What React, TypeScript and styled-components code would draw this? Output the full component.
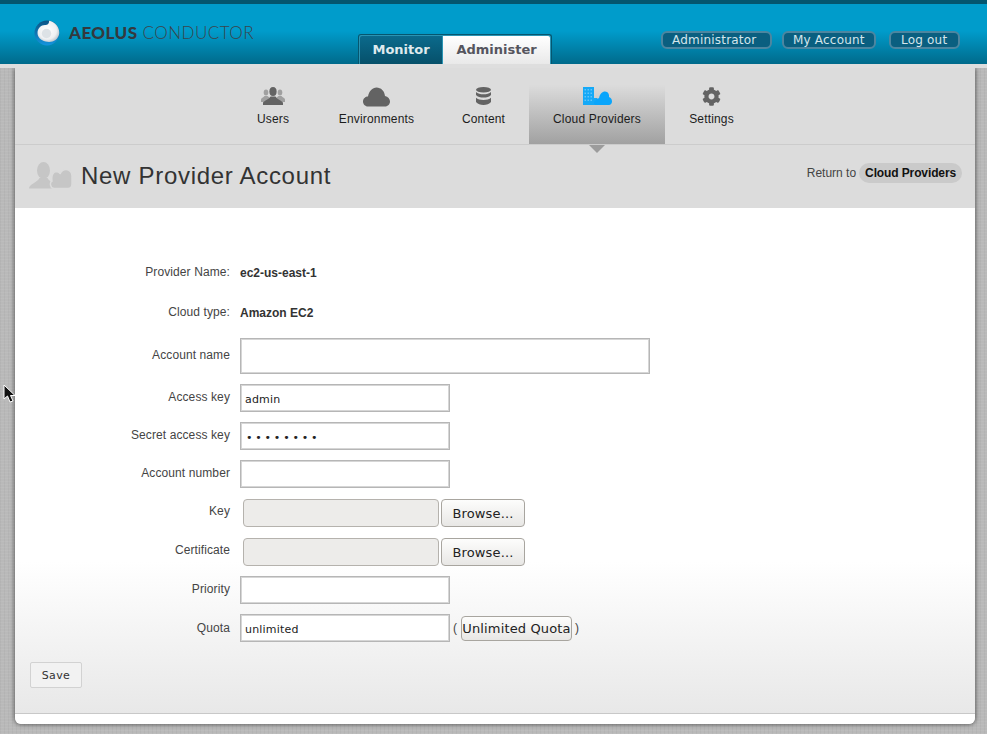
import React from "react";
import styled, { createGlobalStyle } from "styled-components";
import { FaCog } from "react-icons/fa";

const Global = createGlobalStyle`
  html, body { margin: 0; padding: 0; }
  body {
    width: 987px; height: 734px; overflow: hidden;
    font-family: "Liberation Sans", Arial, sans-serif;
    background-color: #b9b9b9;
    background-image:
      repeating-linear-gradient(0deg, rgba(255,255,255,.05) 0 1px, transparent 1px 3px),
      repeating-linear-gradient(90deg, rgba(0,0,0,.03) 0 1px, transparent 1px 4px);
  }
`;

const Page = styled.div`position: relative; width: 987px; height: 734px; overflow: hidden;`;

const Header = styled.header`
  position: relative; z-index: 1;
  box-sizing: border-box;
  height: 68px;
  border-top: 4px solid #04566f;
  border-bottom: 4px solid #dedede;
  background: linear-gradient(#009ccb 0, #009ccb 45%, #006a8b 100%);
  display: flex;
  align-items: flex-start;
`;

const Logo = styled.div`
  display: flex; align-items: center; gap: 9px;
  margin: 15px 0 0 34px; width: 324px;
`;
const LogoText = styled.div`
  font-family: "Lato", sans-serif; font-size: 17px; line-height: 28px; color: #3b444b;
  letter-spacing: .45px; font-weight: 300; white-space: nowrap;
  b { font-weight: 900; color: #34393e; }
`;

const Tabs = styled.nav`
  box-sizing: border-box;
  display: flex; align-items: stretch; margin-top: 30px; width: 194px; height: 30px;
  border: 1px solid #05566f; border-bottom: 0; border-radius: 3px 3px 0 0;
  padding: 1px 1px 0; background: #2a94b4;
`;
const Tab = styled.div<{ $active?: boolean }>`
  display: flex; align-items: center; justify-content: center;
  font-family: "DejaVu Sans", sans-serif; font-weight: 700; font-size: 13px;
  padding-bottom: 1px; box-sizing: border-box;
  width: ${p => (p.$active ? "83px" : "108px")};
  margin-left: ${p => (p.$active ? "0" : "1px")};
  color: ${p => (p.$active ? "#dfeaee" : "#55555e")};
  background: ${p => (p.$active ? "linear-gradient(#0b6a8c, #06506a)" : "linear-gradient(#ffffff, #e9e9e9)")};
  border-radius: ${p => (p.$active ? "2px 0 0 0" : "0 2px 0 0")};
`;

const UserLinks = styled.div`display: flex; margin: 27px 0 0 109px;`;
const UserLink = styled.div<{ $w: number; $gap: number; $pl: number }>`
  box-sizing: border-box; height: 18px; width: ${p => p.$w}px; margin-right: ${p => p.$gap}px;
  padding-left: ${p => p.$pl}px;
  border: 2px solid #4c86a0; border-radius: 6px; background: #0a5f80;
  color: #d5e6ec; font-family: "DejaVu Sans", sans-serif; font-size: 12px; line-height: 15px; letter-spacing: .2px;
  white-space: nowrap;
`;

const Panel = styled.main`
  box-sizing: border-box;
  width: 960px; height: 656px; margin-left: 15px;
  background: #dcdcdc;
  border-radius: 0 0 6px 6px;
  box-shadow: 0 0 5px rgba(0,0,0,.65);
  display: flex; flex-direction: column;
  overflow: hidden;
`;

const Nav = styled.div`
  box-sizing: border-box; height: 77px; flex: none;
  border-bottom: 1px solid #cccccc;
  display: flex; justify-content: center; padding-right: 1px;
`;
const NavItem = styled.div<{ $active?: boolean; $w: number }>`
  position: relative;
  box-sizing: border-box; height: 76px; width: ${p => p.$w}px; padding-top: 19px;
  display: flex; flex-direction: column; align-items: center;
  font-size: 12px; letter-spacing: .17px; color: #1c1c1c; white-space: nowrap;
  background: ${p => (p.$active ? "linear-gradient(#dcdcdc 0, #dcdcdc 22%, #a1a1a1 100%)" : "none")};
  &::after {
    content: "";
    display: ${p => (p.$active ? "block" : "none")};
    position: absolute; left: 50%; bottom: -9px; margin-left: -8px;
    border: 8px solid transparent; border-bottom: 0; border-top-color: #9c9c9c;
  }
`;
const NavIcon = styled.div`height: 24px; display: flex; align-items: flex-start; justify-content: center;`;
const NavLabel = styled.span`line-height: 16px;`;

const TitleBar = styled.div`
  box-sizing: border-box; height: 63px; flex: none;
  display: flex; align-items: center; padding: 0 13px 2px 14px;
`;
const Title = styled.h1`
  margin: 0 0 0 8px; font-size: 24px; font-weight: 400; color: #333; letter-spacing: .7px; line-height: 30px;
`;
const ReturnTo = styled.div`
  margin-left: auto; margin-bottom: 6px; display: flex; align-items: center; gap: 3px;
  font-size: 12px; color: #444;
`;
const Pill = styled.span`
  background: #cacaca; border-radius: 10px; padding: 0 6px; height: 20px; line-height: 20px;
  font-weight: 700; color: #111; letter-spacing: -.12px;
`;

const Content = styled.section`
  flex: 1; background: linear-gradient(#fff 0, #fff 70%, #e8e8e8 100%);
  border-bottom: 1px solid #c8c8c8;
  box-sizing: border-box; padding: 52px 0 0 15px;
`;
const Row = styled.div<{ $h: number; $mb?: number }>`
  display: grid; grid-template-columns: 200px 1fr; column-gap: 10px; align-items: start;
  height: ${p => p.$h}px; margin-bottom: ${p => p.$mb ?? 10}px;
`;
const Label = styled.label<{ $top?: number }>`
  text-align: right; font-size: 12px; letter-spacing: .1px; color: #444; line-height: 16px; padding-top: ${p => p.$top ?? 4}px;
`;
const Value = styled.div`
  font-size: 12px; font-weight: 700; color: #333; line-height: 16px; padding-top: 5px;
`;
const Field = styled.div<{ $top?: number }>`display: flex; align-items: center; margin-top: ${p => p.$top ?? 0}px;`;
const Input = styled.input<{ $w: number; $h: number; $dots?: boolean }>`
  box-sizing: border-box; width: ${p => p.$w}px; height: ${p => p.$h}px;
  border: 1px solid #b6b6b6; box-shadow: inset 0 0 0 1px #d6d6d6; border-radius: 0; background: #fff; outline: 0;
  padding: 2px 4px 0 ${p => (p.$dots ? "5px" : "4px")}; margin: 0;
  font-family: "DejaVu Sans", sans-serif; font-size: 11px; color: #222;
  letter-spacing: ${p => (p.$dots ? "2.8px" : ".2px")};
`;
const FileBox = styled.div`
  box-sizing: border-box; width: 196px; height: 28px; margin: 0 2px 0 3px;
  border: 1px solid #b5b2ad; border-radius: 4px; background: #edecea;
`;
const NativeButton = styled.button<{ $w: number; $h: number }>`
  box-sizing: border-box; width: ${p => p.$w}px; height: ${p => p.$h}px; padding: 0; margin: 0;
  border: 1px solid #a8a59f; border-radius: 4px;
  background: linear-gradient(#fdfdfc, #e8e7e5);
  font-family: "DejaVu Sans", sans-serif; font-size: 13px; letter-spacing: .15px; color: #222; white-space: nowrap;
`;
const Paren = styled.span`
  font-size: 12px; color: #444; margin: 0 4px 0 3px;
`;
const SaveButton = styled.button`
  display: block; box-sizing: border-box; width: 52px; height: 26px; margin: 20px 0 0 0; padding: 0;
  border: 1px solid #d2d2d2; border-radius: 2px; background: #f2f2f2;
  font-family: "DejaVu Sans", sans-serif; font-size: 11px; letter-spacing: .4px; color: #333;
`;
const Footer = styled.div`height: 10px; flex: none; background: #fff;`;

const Cursor = styled.svg`position: absolute; left: 3px; top: 384px;`;

const LogoBall = () => (
  <svg width="26" height="27" viewBox="0 0 26 27">
    <defs>
      <radialGradient id="lg1" cx="45%" cy="45%" r="60%">
        <stop offset="0" stopColor="#ffffff" />
        <stop offset=".7" stopColor="#eef0f2" />
        <stop offset="1" stopColor="#b8c2c9" />
      </radialGradient>
      <linearGradient id="lg2" x1="0" y1="0" x2="0" y2="1">
        <stop offset="0" stopColor="#0b5485" />
        <stop offset="1" stopColor="#1494dd" />
      </linearGradient>
    </defs>
    <circle cx="13" cy="13" r="12.5" fill="url(#lg2)" />
    <path d="M15 .7C21 1.500 25.500 7 25.300 13C25 16 23.500 18.500 21.500 20C19 22 15 22.500 11.500 21.500C7 20.500 3.500 17 3.500 13C3.500 8.500 7 5 11 5C13.500 5 15.500 3.500 15 .7Z" fill="url(#lg1)" />
    <circle cx="12.500" cy="13.500" r="4.700" fill="#dde2e6" />
  </svg>
);

const UsersIcon = () => (
  <svg width="24" height="18" viewBox="0 0 24 18">
    <g fill="#a0a0a0">
      <ellipse cx="5" cy="5.500" rx="2.300" ry="3" />
      <path d="M0 15V12.500C0 11 2.500 10.500 3.500 9H6.500L9 11V15Z" />
      <ellipse cx="19" cy="5.500" rx="2.300" ry="3" />
      <path d="M24 15V12.500C24 11 21.500 10.500 20.500 9H17.500L15 11V15Z" />
    </g>
    <g fill="#636363">
      <ellipse cx="12" cy="4.500" rx="3.600" ry="4.500" />
      <path d="M2 18V16C2 14 7.500 13 9.500 9.500H14.500C16.500 13 22 14 22 16V18Z" />
    </g>
  </svg>
);

const CloudIcon = () => (
  <svg width="27" height="20" viewBox="0 0 27 20" style={{ display: "block" }}>
    <path d="M5 19.500C2 19.500 0 17 0 14.500C0 11.500 2.500 9.500 5 9.500C6 4 9.500 .5 13.500 .5C18 .5 21.500 4 22 9C25 9.500 27 12 27 14.500C27 17 25 19.500 22 19.500Z" fill="#636363" />
  </svg>
);

const StackIcon = () => (
  <svg width="15" height="18" viewBox="0 0 15 18" style={{ display: "block" }}>
    <g fill="#636363">
      <ellipse cx="7.500" cy="2.800" rx="7.500" ry="2.800" />
      <path d="M0 5C1.500 6.800 4.500 7.300 7.500 7.300C10.500 7.300 13.500 6.800 15 5V8C13.500 10 10.500 10.500 7.500 10.500C4.500 10.500 1.500 10 0 8Z" />
      <path d="M0 10.800C1.500 12.500 4.500 13 7.500 13C10.500 13 13.500 12.500 15 10.800V15C13.500 17 10.500 18 7.500 18C4.500 18 1.500 17 0 15Z" />
    </g>
  </svg>
);

const ProvidersIcon = () => (
  <svg width="29" height="18" viewBox="0 0 29 18" style={{ display: "block" }}>
    <path d="M0 0H11V18H0Z" fill="#15a9f7" />
    <path d="M1.500 2h1.500v1.500H1.500zM4.500 2h1.500v1.500H4.500zM7.500 2h1.500v1.500H7.500zM1.500 5.500h1.500v1.500H1.500zM4.500 5.500h1.500v1.500H4.500zM7.500 5.500h1.500v1.500H7.500zM1.500 9h1.500v1.500H1.500zM4.500 9h1.500v1.500H4.500zM7.500 9h1.500v1.500H7.500zM1.500 12.500h1.500v1.500H1.500zM4.500 12.500h1.500v1.500H4.500zM7.500 12.500h1.500v1.500H7.500z" fill="#62c4f9" />
    <path d="M11 11H14V18H11Z" fill="#15a9f7" />
    <path d="M13 18C10.500 18 10 14 13 13.500C13.500 11.500 15 11 16 11.500C16.500 7 19.500 4.500 22 4.500C25 4.500 26.500 7.500 26 10C28 10.500 29 12.500 29 14.500C29 16.500 27.500 18 26 18Z" fill="#0aa5fb" />
  </svg>
);

const PersonCloud = () => (
  <svg width="44" height="27" viewBox="0 0 44 27">
    <g fill="#c6c6c6">
      <ellipse cx="14.500" cy="8.500" rx="6.500" ry="8.500" />
      <path d="M0 26.500C0 22 8 21 10.500 16H18.500C21 21 29 22 29.500 26.500Z" />
      <path d="M25 26.500C21 26.500 20.500 20 23 19C22 14 24 10 27 9.500C29.500 9.500 31 11 31 12C32.500 8.500 35 7.500 37 7.500C41 7.500 43 11 43 14V22C43 25 41 26.500 39 26.500Z" stroke="#dcdcdc" strokeWidth="1.500" />
    </g>
  </svg>
);

const CursorIcon = () => (
  <Cursor width="14" height="20" viewBox="0 0 14 20">
    <path d="M1 1V15L4.500 12L7 18L10 17L7.500 11.500H12Z" fill="#111" stroke="#fff" strokeWidth="1" />
  </Cursor>
);

export default function App() {
  return (
    <Page>
      <Global />
      <Header>
        <Logo>
          <LogoBall />
          <LogoText><b>AEOLUS</b> CONDUCTOR</LogoText>
        </Logo>
        <Tabs>
          <Tab $active>Monitor</Tab>
          <Tab>Administer</Tab>
        </Tabs>
        <UserLinks>
          <UserLink $w={111} $gap={10} $pl={9}>Administrator</UserLink>
          <UserLink $w={94} $gap={13} $pl={9}>My Account</UserLink>
          <UserLink $w={71} $gap={0} $pl={10}>Log out</UserLink>
        </UserLinks>
      </Header>
      <Panel>
        <Nav>
          <NavItem $w={84}><NavIcon><UsersIcon /></NavIcon><NavLabel>Users</NavLabel></NavItem>
          <NavItem $w={123}><NavIcon><CloudIcon /></NavIcon><NavLabel>Environments</NavLabel></NavItem>
          <NavItem $w={91}><NavIcon><StackIcon /></NavIcon><NavLabel>Content</NavLabel></NavItem>
          <NavItem $w={136} $active><NavIcon><ProvidersIcon /></NavIcon><NavLabel>Cloud Providers</NavLabel></NavItem>
          <NavItem $w={93}><NavIcon><FaCog size={19} color="#636363" /></NavIcon><NavLabel>Settings</NavLabel></NavItem>
        </Nav>
        <TitleBar>
          <PersonCloud />
          <Title>New Provider Account</Title>
          <ReturnTo>Return to <Pill>Cloud Providers</Pill></ReturnTo>
        </TitleBar>
        <Content>
          <Row $h={30}><Label>Provider Name:</Label><Value>ec2-us-east-1</Value></Row>
          <Row $h={38} $mb={0}><Label>Cloud type:</Label><Value>Amazon EC2</Value></Row>
          <Row $h={36}><Label $top={9}>Account name</Label><Field><Input $w={410} $h={36} /></Field></Row>
          <Row $h={28}><Label $top={5}>Access key</Label><Field><Input $w={210} $h={28} readOnly value="admin" /></Field></Row>
          <Row $h={28}><Label $top={5}>Secret access key</Label><Field><Input $w={210} $h={28} $dots type="password" readOnly value="password" /></Field></Row>
          <Row $h={28}><Label $top={5}>Account number</Label><Field><Input $w={210} $h={28} /></Field></Row>
          <Row $h={29}><Label $top={5}>Key</Label><Field $top={1}><FileBox /><NativeButton $w={84} $h={28}>Browse...</NativeButton></Field></Row>
          <Row $h={29}><Label $top={5}>Certificate</Label><Field $top={1}><FileBox /><NativeButton $w={84} $h={28}>Browse...</NativeButton></Field></Row>
          <Row $h={28}><Label $top={5}>Priority</Label><Field><Input $w={210} $h={28} /></Field></Row>
          <Row $h={28} $mb={0}><Label $top={6}>Quota</Label><Field><Input $w={210} $h={28} readOnly value="unlimited" /><Paren>(</Paren><NativeButton $w={111} $h={25}>Unlimited Quota</NativeButton><Paren>)</Paren></Field></Row>
          <SaveButton>Save</SaveButton>
        </Content>
        <Footer />
      </Panel>
      <CursorIcon />
    </Page>
  );
}
